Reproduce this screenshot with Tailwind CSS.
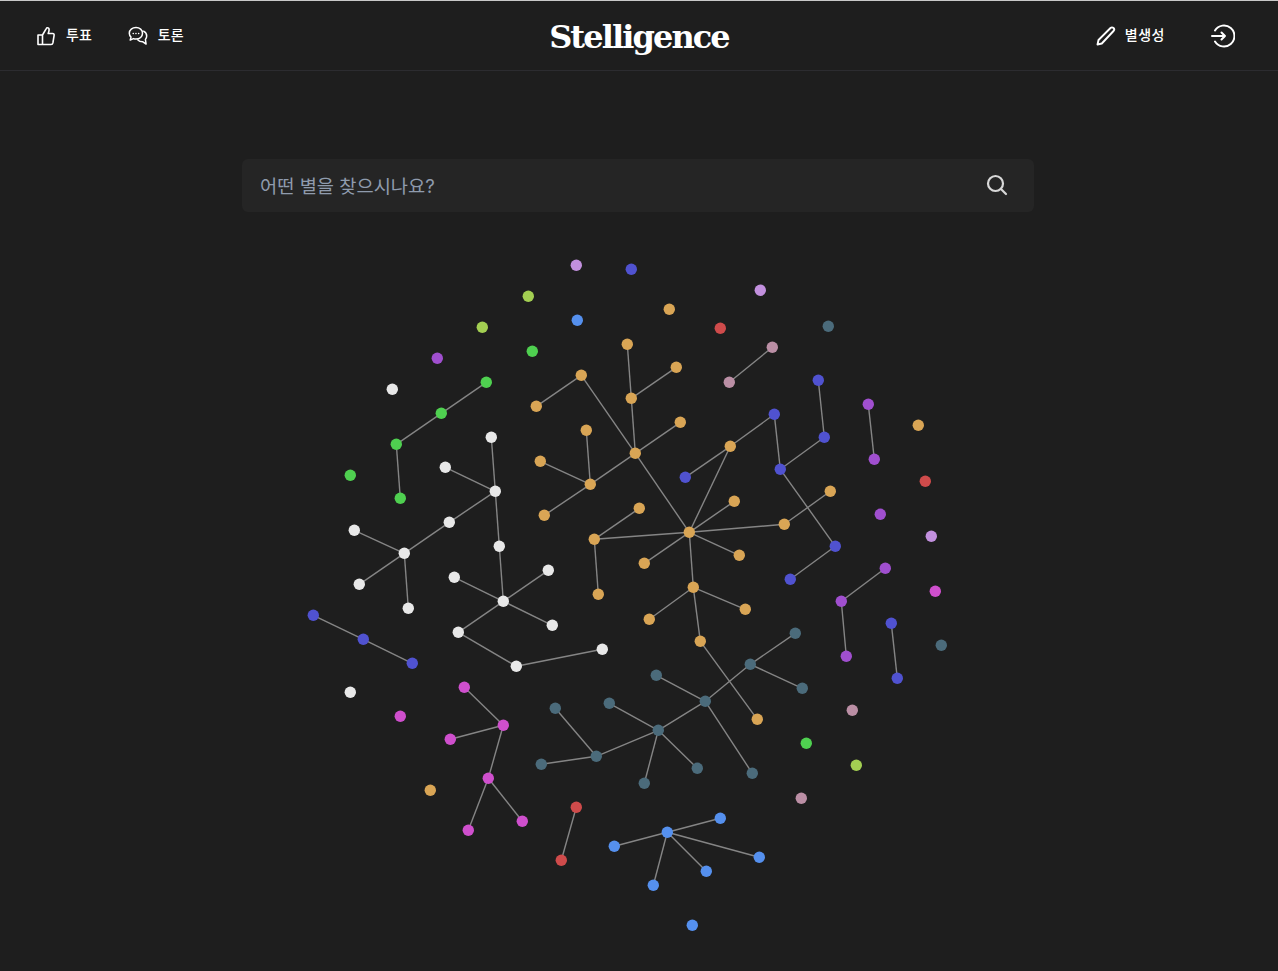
<!DOCTYPE html>
<html lang="ko">
<head>
    <meta charset="UTF-8">
    <meta name="viewport" content="width=device-width, initial-scale=1.0">
    <title>Stelligence</title>
    <script src="https://cdn.jsdelivr.net/npm/@tailwindcss/browser@4"></script>
</head>
<body class="bg-[#1e1e1e] h-[971px] overflow-hidden font-['Inter','Noto_Sans_CJK_KR',sans-serif]">
    <!-- Top nav -->
    <header class="grid grid-cols-3 items-center h-[71px] border-t border-t-[#c8c8c8] border-b border-b-[#2c2c30] text-white">
        <nav class="flex items-center gap-9 pl-9">
            <a href="#" class="flex items-center gap-[10px] text-[14px] font-medium">
                <svg class="w-5 h-5" viewBox="0 0 20 20" fill="none" stroke="currentColor" stroke-width="1.6" stroke-linejoin="round" stroke-linecap="round">
                    <path d="M6.500 9v9.500H2V9h4.500zM6.500 9l3.600-6.200c.3-.6.7-1 1.300-1 1 0 1.700.8 1.700 1.900 0 1.200-.5 2.700-.9 3.800h4.500c1 0 1.600.8 1.400 1.800l-1.200 7.600c-.2 1-.8 1.600-1.800 1.600H6.500"/>
                </svg>
                <span class="-mt-[2px]">투표</span>
            </a>
            <a href="#" class="flex items-center gap-[10px] text-[14px] font-medium">
                <svg class="w-5 h-5" viewBox="0 0 20 20" fill="none" stroke="currentColor" stroke-width="1.5" stroke-linejoin="round" stroke-linecap="round">
                    <path d="M8 1.500c-3.700 0-6.700 2.500-6.700 5.800 0 1.500.6 2.800 1.700 3.800l-.8 3 3.200-1.500c.8.3 1.700.5 2.600.5 3.700 0 6.500-2.500 6.500-5.800S11.700 1.500 8 1.500z"/>
                    <path d="M15.600 5.200c1.900 1 3.100 2.800 3.100 4.800 0 1.300-.5 2.500-1.300 3.400l.7 4.600-3.600-2.300c-1.800 0-3.500-.6-4.600-1.800"/>
                    <path d="M5.200 7.400h.1M7.900 7.400h.1M10.600 7.400h.1" stroke-width="1.500"/>
                </svg>
                <span class="-mt-[2px]">토론</span>
            </a>
        </nav>
        <h1 class="justify-self-center mt-[2px] font-['DejaVu_Serif',serif] font-bold text-[32px] leading-none tracking-[-1.9px]">Stelligence</h1>
        <nav class="flex items-center justify-end pr-[43px]">
            <a href="#" class="flex items-center gap-[9px] text-[14px] font-medium tracking-[0.5px]">
                <svg class="w-5 h-5" viewBox="0 0 20 20" fill="none" stroke="currentColor" stroke-width="1.900" stroke-linejoin="round" stroke-linecap="round">
                    <path d="M1.500 18.500l1-4.500L14.500 2c.9-.9 2.100-.9 3 0s.9 2.100 0 3L5.800 17.500l-4.300 1z"/>
                </svg>
                <span class="-mt-[2px]">별생성</span>
            </a>
            <a href="#" class="ml-[46px]">
                <svg class="w-6 h-6" viewBox="0 0 24 24" fill="none" stroke="currentColor" stroke-width="2" stroke-linejoin="round" stroke-linecap="round">
                    <path d="M4 6.500a10.500 10.500 0 1 1 0 11"/>
                    <path d="M1 12h13M10.500 8.500L14 12l-3.500 3.500"/>
                </svg>
            </a>
        </nav>
    </header>

    <main>
        <!-- Search -->
        <div class="flex items-center w-[792px] h-[53px] ml-[242px] mt-[88px] pl-[18px] pr-[26px] rounded-md bg-[#252525]">
            <input type="text" placeholder="어떤 별을 찾으시나요?" class="flex-1 pt-[3px] bg-transparent text-[18.700px] text-white placeholder:text-[#8f9bad] outline-none">
            <svg class="w-[22px] h-[22px] -mt-[1px] text-[#d8d8d8]" viewBox="0 0 22 22" fill="none" stroke="currentColor" stroke-width="2.200" stroke-linecap="round">
                <circle cx="9.500" cy="9.500" r="7.500"/>
                <path d="M15 15l5 5"/>
            </svg>
        </div>

        <!-- Star graph -->
        <svg id="graph" class="block" width="1278" height="759" viewBox="0 212 1278 759"></svg>
    </main>

    <script>
        const links = [
            // orange
            [536,406,581,375],[581,375,635,453],[627,344,631,398],[631,398,676,367],[631,398,635,453],
            [635,453,680,422],[635,453,590,484],[635,453,689,532],[590,484,540,461],[590,484,586,430],
            [590,484,544,515],[689,532,730,446],[689,532,734,501],[689,532,784,524],[784,524,830,491],
            [689,532,739,555],[689,532,644,563],[689,532,594,539],[594,539,639,508],[594,539,598,594],
            [689,532,693,587],[693,587,649,619],[693,587,745,609],[693,587,700,641],[700,641,757,719],
            // indigo
            [685,477,730,446],[730,446,774,414],[774,414,780,469],[780,469,824,437],[818,380,824,437],
            [780,469,835,546],[835,546,790,579],[313,615,363,639],[363,639,412,663],[891,623,897,678],
            // pink
            [729,382,772,347],
            // green
            [486,382,441,413],[441,413,396,444],[396,444,400,498],
            // white
            [491,437,495,491],[445,467,495,491],[495,491,449,522],[449,522,404,553],[404,553,354,530],
            [404,553,359,584],[404,553,408,608],[495,491,499,546],[499,546,503,601],[503,601,454,577],
            [503,601,548,570],[503,601,552,625],[503,601,458,632],[458,632,516,666],[516,666,602,649],
            // purple
            [868,404,874,459],[885,568,841,601],[841,601,846,656],
            // teal
            [795,633,750,664],[750,664,802,688],[750,664,705,701],[656,675,705,701],[705,701,752,773],
            [705,701,658,730],[609,703,658,730],[658,730,697,768],[658,730,644,783],[658,730,596,756],
            [596,756,555,708],[596,756,541,764],
            // magenta
            [464,687,503,725],[503,725,450,739],[503,725,488,778],[488,778,468,830],[488,778,522,821],
            // red
            [576,807,561,860],
            // light blue
            [667,832,720,818],[667,832,614,846],[667,832,653,885],[667,832,706,871],[667,832,759,857]
        ];

        const stars = {
            "#d9a555": [[536,406],[581,375],[627,344],[631,398],[676,367],[635,453],[680,422],[590,484],[540,461],[586,430],[544,515],[689,532],[730,446],[734,501],[784,524],[830,491],[739,555],[644,563],[594,539],[639,508],[598,594],[693,587],[649,619],[745,609],[700,641],[757,719],[669,309],[918,425],[430,790]],
            "#5052d0": [[685,477],[774,414],[780,469],[824,437],[818,380],[835,546],[790,579],[313,615],[363,639],[412,663],[891,623],[897,678],[631,269]],
            "#bb8fa5": [[729,382],[772,347],[852,710],[801,798]],
            "#4fd050": [[486,382],[441,413],[396,444],[400,498],[532,351],[350,475],[806,743]],
            "#e8e8e8": [[491,437],[495,491],[445,467],[449,522],[404,553],[354,530],[359,584],[408,608],[499,546],[503,601],[454,577],[548,570],[552,625],[458,632],[516,666],[602,649],[392,389],[350,692]],
            "#a04fcf": [[868,404],[874,459],[885,568],[841,601],[846,656],[437,358],[880,514]],
            "#c290de": [[576,265],[760,290],[931,536]],
            "#4b6b7b": [[795,633],[750,664],[802,688],[705,701],[656,675],[752,773],[658,730],[609,703],[697,768],[644,783],[596,756],[555,708],[541,764],[828,326],[941,645]],
            "#cf4fcd": [[464,687],[503,725],[450,739],[488,778],[468,830],[522,821],[935,591],[400,716]],
            "#cf4b4b": [[576,807],[561,860],[720,328],[925,481]],
            "#5590ee": [[667,832],[720,818],[614,846],[653,885],[706,871],[759,857],[577,320],[692,925]],
            "#a3cf52": [[528,296],[482,327],[856,765]]
        };

        const graph = document.getElementById("graph");
        function addShape(tag, attrs) {
            const el = document.createElementNS("http://www.w3.org/2000/svg", tag);
            Object.keys(attrs).forEach(key => el.setAttribute(key, attrs[key]));
            graph.appendChild(el);
        }

        links.forEach(([x1, y1, x2, y2]) => {
            addShape("line", { x1: x1 + 0.3, y1: y1 + 0.3, x2: x2 + 0.3, y2: y2 + 0.3, stroke: "#858585", "stroke-width": 1.4 });
        });
        Object.keys(stars).forEach(color => {
            stars[color].forEach(([cx, cy]) => {
                addShape("circle", { cx: cx + 0.3, cy: cy + 0.3, r: 5.7, fill: color });
            });
        });
    </script>
</body>
</html>
